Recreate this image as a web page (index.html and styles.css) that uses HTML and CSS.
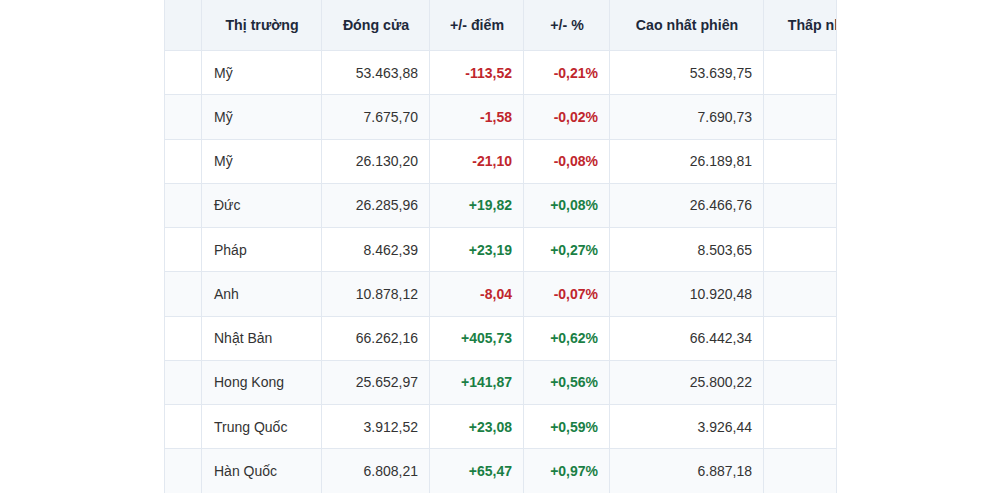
FILE: index.html
```html
<!DOCTYPE html>
<html lang="vi">
<head>
<meta charset="utf-8">
<title>Chỉ số thị trường</title>
<link rel="stylesheet" href="styles.css">
</head>
<body>
<div class="table-wrap">
  <table class="market">
    <thead>
      <tr>
        <th class="c-idx"></th>
        <th class="c-market">Thị trường</th>
        <th class="c-close">Đóng cửa</th>
        <th class="c-pt">+/- điểm</th>
        <th class="c-pct">+/- %</th>
        <th class="c-high">Cao nhất phiên</th>
        <th class="c-low">Thấp nhất phiên</th>
      </tr>
    </thead>
    <tbody>
      <tr><td></td><td class="name">Mỹ</td><td class="num">53.463,88</td><td class="num down">-113,52</td><td class="num down">-0,21%</td><td class="num">53.639,75</td><td class="num">53.289,41</td></tr>
      <tr><td></td><td class="name">Mỹ</td><td class="num">7.675,70</td><td class="num down">-1,58</td><td class="num down">-0,02%</td><td class="num">7.690,73</td><td class="num">7.652,18</td></tr>
      <tr><td></td><td class="name">Mỹ</td><td class="num">26.130,20</td><td class="num down">-21,10</td><td class="num down">-0,08%</td><td class="num">26.189,81</td><td class="num">26.041,37</td></tr>
      <tr><td></td><td class="name">Đức</td><td class="num">26.285,96</td><td class="num up">+19,82</td><td class="num up">+0,08%</td><td class="num">26.466,76</td><td class="num">26.150,04</td></tr>
      <tr><td></td><td class="name">Pháp</td><td class="num">8.462,39</td><td class="num up">+23,19</td><td class="num up">+0,27%</td><td class="num">8.503,65</td><td class="num">8.421,90</td></tr>
      <tr><td></td><td class="name">Anh</td><td class="num">10.878,12</td><td class="num down">-8,04</td><td class="num down">-0,07%</td><td class="num">10.920,48</td><td class="num">10.851,33</td></tr>
      <tr><td></td><td class="name">Nhật Bản</td><td class="num">66.262,16</td><td class="num up">+405,73</td><td class="num up">+0,62%</td><td class="num">66.442,34</td><td class="num">65.870,12</td></tr>
      <tr><td></td><td class="name">Hong Kong</td><td class="num">25.652,97</td><td class="num up">+141,87</td><td class="num up">+0,56%</td><td class="num">25.800,22</td><td class="num">25.498,64</td></tr>
      <tr><td></td><td class="name">Trung Quốc</td><td class="num">3.912,52</td><td class="num up">+23,08</td><td class="num up">+0,59%</td><td class="num">3.926,44</td><td class="num">3.889,17</td></tr>
      <tr><td></td><td class="name">Hàn Quốc</td><td class="num">6.808,21</td><td class="num up">+65,47</td><td class="num up">+0,97%</td><td class="num">6.887,18</td><td class="num">6.742,05</td></tr>
    </tbody>
  </table>
</div>
</body>
</html>
```

FILE: styles.css
```css
html, body {
  margin: 0;
  padding: 0;
  background: #ffffff;
}

body {
  font-family: "Liberation Sans", Arial, sans-serif;
  font-size: 14px;
  color: #333333;
}

.table-wrap {
  box-sizing: border-box;
  width: 673px;
  margin: -1px auto 0 164px;
  border: 1px solid #e2e8f0;
  overflow: hidden;
}

.market {
  border-collapse: collapse;
  table-layout: fixed;
  width: 756px;
  white-space: nowrap;
}

.market th,
.market td {
  border: 1px solid #e2e8f0;
  padding: 0 11px 0 12px;
  line-height: 20px;
}

.market tr > :first-child {
  border-left: 0;
}

.market thead tr:first-child th {
  border-top: 0;
}

.market th {
  height: 50px;
  background: #f1f5f9;
  color: #1e293b;
  font-weight: 700;
  font-size: 14.2px;
  text-align: center;
}

.market td {
  height: 43.25px;
}

.market tbody tr:nth-child(even) td {
  background: #f8fafc;
}

.c-idx { width: 13px; }
.c-market { width: 96px; }
.c-close { width: 84px; }
.c-pt { width: 70px; }
.c-pct { width: 62px; }
.c-high { width: 130px; }
.c-low { width: 133px; }

.name {
  text-align: left;
}

.num {
  text-align: right;
}

.up {
  color: #1a7f45;
  font-weight: 700;
}

.down {
  color: #c0262d;
  font-weight: 700;
}
```
